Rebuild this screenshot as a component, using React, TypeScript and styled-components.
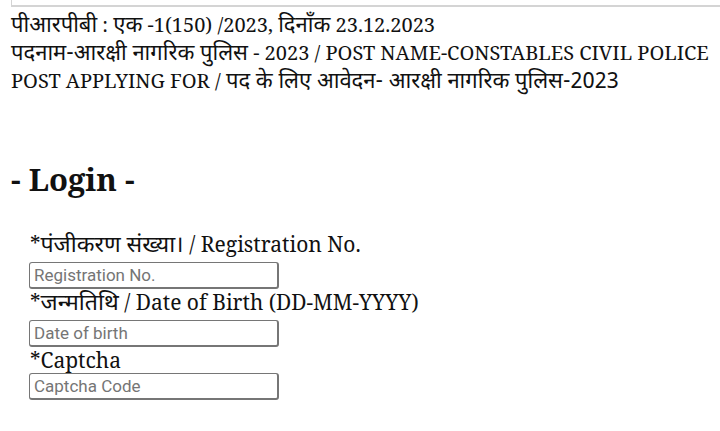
import styled, { createGlobalStyle } from 'styled-components';

const GlobalStyle = createGlobalStyle`
  html, body {
    margin: 0;
    padding: 0;
    background: #fff;
    overflow: hidden;
  }
  body {
    font-family: "Noto Serif", "Noto Sans Devanagari", serif;
    color: #111;
  }
`;

const Page = styled.div`
  width: 720px;
  height: 431px;
  overflow: hidden;
`;

const NoticeBox = styled.div`
  height: 5px;
  margin-left: 11px;
  margin-right: -20px;
  border-left: 1px solid #d4d4d4;
  border-bottom: 2px solid #d4d4d4;
`;

const Notice = styled.div`
  padding: 4px 0 0 11px;
  font-size: 20px;
  line-height: 28px;
  white-space: nowrap;
`;

const Line = styled.div`
  height: 28px;
`;

// Devanagari runs render larger than the Latin serif text
const Deva = styled.span`
  font-family: "Noto Sans Devanagari", sans-serif;
  font-size: 1.1em;
  line-height: 1;
`;

const Heading = styled.h2`
  margin: 66px 0 34px 11px;
  font-size: 31px;
  line-height: 36px;
  font-weight: 700;
`;

const Form = styled.form`
  display: flex;
  flex-direction: column;
  align-items: flex-start;
  padding-left: 29px;
`;

const Label = styled.label<{ $tall?: boolean }>`
  display: block;
  height: 26px;
  padding-left: 1px;
  font-size: 21px;
  line-height: 26px;
  margin-bottom: ${(p) => (p.$tall ? '5px' : '0')};
  white-space: nowrap;
`;

const Input = styled.input`
  box-sizing: border-box;
  width: 250px;
  height: 27px;
  margin: 0;
  padding: 0 4px;
  border: 1px solid #767676;
  border-bottom-width: 2px;
  border-right-width: 2px;
  border-radius: 3px;
  background: #fff;
  font-family: Roboto, "Liberation Sans", sans-serif;
  font-size: 17px;
  outline: none;
  &::placeholder {
    color: #757575;
  }
`;

export default function App() {
  return (
    <Page>
      <GlobalStyle />
      <NoticeBox />
      <Notice>
        <Line>
          <Deva>पीआरपीबी</Deva> : <Deva>एक</Deva> -1(150) /2023, <Deva>दिनाँक</Deva> 23.12.2023
        </Line>
        <Line>
          <Deva>पदनाम-आरक्षी नागरिक पुलिस</Deva> - 2023 / POST NAME-CONSTABLES CIVIL POLICE
        </Line>
        <Line>
          POST APPLYING FOR / <Deva>पद के लिए आवेदन- आरक्षी नागरिक पुलिस-2023</Deva>
        </Line>
      </Notice>
      <Heading>- Login -</Heading>
      <Form>
        <Label $tall>
          *<Deva>पंजीकरण संख्या।</Deva> / Registration No.
        </Label>
        <Input placeholder="Registration No." />
        <Label $tall>
          *<Deva>जन्मतिथि</Deva> / Date of Birth (DD-MM-YYYY)
        </Label>
        <Input placeholder="Date of birth" />
        <Label>*Captcha</Label>
        <Input placeholder="Captcha Code" />
      </Form>
    </Page>
  );
}
